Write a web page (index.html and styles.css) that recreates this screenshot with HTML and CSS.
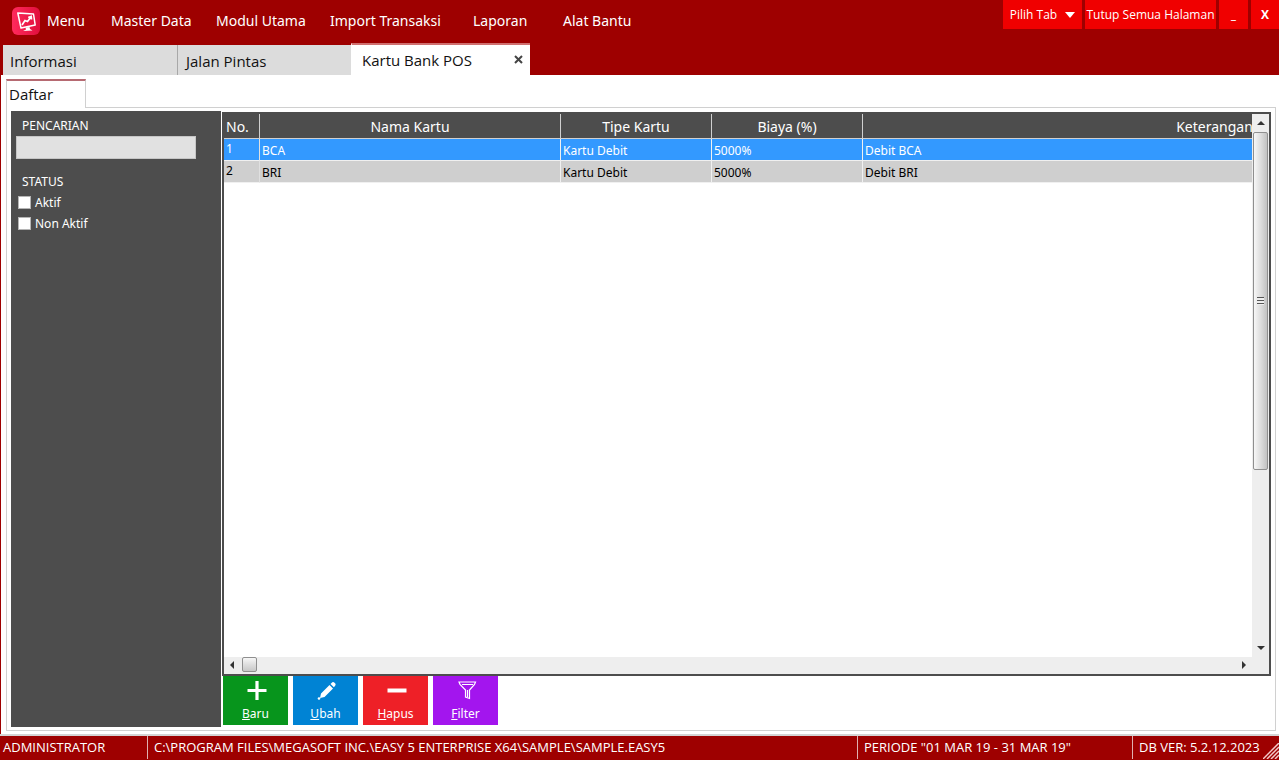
FILE: index.html
```html
<!DOCTYPE html>
<html lang="id">
<head>
<meta charset="utf-8">
<title>Kartu Bank POS</title>
<link rel="stylesheet" href="styles.css">
</head>
<body>
<header class="top">
  <div class="topbar">
    <nav class="menu">
      <a class="menu-item brand" href="#menu">
        <svg class="logo" viewBox="0 0 28 28" aria-hidden="true">
          <defs><linearGradient id="lg" x1="0" y1="0" x2="1" y2="0"><stop offset="0" stop-color="#ff2a5c"/><stop offset="1" stop-color="#e00f3c"/></linearGradient></defs>
          <rect width="28" height="28" rx="6" fill="url(#lg)"/>
          <path d="M5.800 6L21.500 7L23.200 18L9 21Z" fill="none" stroke="#fff" stroke-width="1.500" stroke-linejoin="round"/>
          <path d="M10 18L13 13.500L15.500 14.500L19 10M16.200 10.500L19.200 9.500L19.500 12.500" fill="none" stroke="#fff" stroke-width="1.700"/>
          <path d="M13.500 20.500L17.500 20L18 22L20.500 23.500L11 24L14 22.500Z" fill="#fff"/>
        </svg>
        <span>Menu</span>
      </a>
      <a class="menu-item master" href="#master">Master Data</a>
      <a class="menu-item modul" href="#modul">Modul Utama</a>
      <a class="menu-item import" href="#import">Import Transaksi</a>
      <a class="menu-item laporan" href="#laporan">Laporan</a>
      <a class="menu-item alat" href="#alat">Alat Bantu</a>
    </nav>
    <div class="window-buttons">
      <button class="wbtn pick" type="button">Pilih Tab
        <svg class="caret" viewBox="0 0 10 6" aria-hidden="true"><path d="M0 0H10L5 6Z" fill="#fff"/></svg>
      </button>
      <button class="wbtn close-all" type="button">Tutup Semua Halaman</button>
      <button class="wbtn small" type="button">_</button>
      <button class="wbtn small last" type="button">X</button>
    </div>
  </div>
  <div class="tabs">
    <button class="tab first" type="button">Informasi</button>
    <button class="tab" type="button">Jalan Pintas</button>
    <button class="tab active" type="button"><span>Kartu Bank POS</span><svg class="tab-close" viewBox="0 0 9 9" aria-hidden="true"><path d="M1 1L8 8M8 1L1 8" stroke="#444" stroke-width="2"/></svg></button>
  </div>
</header>
<main class="page">
  <button class="subtab" type="button">Daftar</button>
  <section class="pane">
    <aside class="sidebar">
      <label class="side-title" for="cari">PENCARIAN</label>
      <input class="search" id="cari" type="text">
      <div class="side-title status-title">STATUS</div>
      <label class="check"><input type="checkbox">Aktif</label>
      <label class="check"><input type="checkbox">Non Aktif</label>
    </aside>
    <div class="content">
      <div class="grid">
        <div class="grid-view">
          <table class="data">
            <colgroup><col class="c-no"><col class="c-name"><col class="c-mid"><col class="c-mid"><col class="c-note"></colgroup>
            <thead><tr><th class="no">No.</th><th>Nama Kartu</th><th>Tipe Kartu</th><th>Biaya (%)</th><th>Keterangan</th></tr></thead>
            <tbody>
              <tr class="selected"><td class="no">1</td><td>BCA</td><td>Kartu Debit</td><td>5000%</td><td>Debit BCA</td></tr>
              <tr><td class="no">2</td><td>BRI</td><td>Kartu Debit</td><td>5000%</td><td>Debit BRI</td></tr>
            </tbody>
          </table>
        </div>
        <div class="vbar">
          <svg class="arrow-v" viewBox="0 0 16 18" aria-hidden="true"><path d="M4 11L8 7L12 11Z" fill="#333"/></svg>
          <div class="vthumb"><i class="grip"></i></div>
          <div class="vtrack"></div>
          <svg class="arrow-v" viewBox="0 0 16 18" aria-hidden="true"><path d="M4 7L8 11L12 7Z" fill="#333"/></svg>
        </div>
        <div class="hbar">
          <svg class="arrow-h" viewBox="0 0 18 16" aria-hidden="true"><path d="M10 4L6 8L10 12Z" fill="#333"/></svg>
          <div class="hthumb"></div>
          <div class="htrack"></div>
          <svg class="arrow-h" viewBox="0 0 18 16" aria-hidden="true"><path d="M8 4L12 8L8 12Z" fill="#333"/></svg>
        </div>
        <div class="corner"></div>
      </div>
      <div class="actions">
        <button class="action green" type="button"><svg viewBox="0 0 24 24" aria-hidden="true"><path d="M13 2V21M3.500 11.500H22.500" stroke="#fff" stroke-width="3.200"/></svg><span><u>B</u>aru</span></button>
        <button class="action blue" type="button"><svg viewBox="0 0 24 24" aria-hidden="true"><path d="M7 14.500L15.500 6L19 9.500L10.500 18L6 19ZM16.500 5L18.300 3.300Q19.300 2.500 20.200 3.400L21.300 4.500Q22 5.500 21.300 6.500L19.900 8.300Z" fill="#fff"/><circle cx="5" cy="19.500" r="1.300" fill="#fff"/></svg><span><u>U</u>bah</span></button>
        <button class="action red" type="button"><svg viewBox="0 0 24 24" aria-hidden="true"><path d="M3.500 11.500H22.500" stroke="#fff" stroke-width="4"/></svg><span><u>H</u>apus</span></button>
        <button class="action purple" type="button"><svg viewBox="0 0 24 24" aria-hidden="true"><path d="M5 3H21.500L20.500 5.500L15.500 11V19.500L11.500 18V11L6 5.500ZM8 5.500H19M13.500 11V18" fill="none" stroke="#fff" stroke-width="1.200"/></svg><span><u>F</u>ilter</span></button>
      </div>
    </div>
  </section>
</main>
<footer class="status">
  <span class="user">ADMINISTRATOR</span>
  <span class="path">C:\PROGRAM FILES\MEGASOFT INC.\EASY 5 ENTERPRISE X64\SAMPLE\SAMPLE.EASY5</span>
  <span class="period">PERIODE "01 MAR 19 - 31 MAR 19"</span>
  <span class="version">DB VER: 5.2.12.2023</span>
  <svg class="resize" viewBox="0 0 16 16" aria-hidden="true"><path d="M0 16L16 0M4 16L16 4M8 16L16 8M12 16L16 12" stroke="#f3c9c9" stroke-width="1.500"/></svg>
</footer>
</body>
</html>
```
FILE: styles.css
```css
* { box-sizing: border-box; }
body {
  margin: 0;
  height: 100vh;
  display: flex;
  flex-direction: column;
  background: #9e0000;
  color: #111;
  font-family: "Noto Sans", "Open Sans", sans-serif;
  font-size: 12px;
}
button { font: inherit; color: inherit; border: 0; margin: 0; padding: 0; }

.topbar { display: flex; justify-content: space-between; align-items: flex-start; height: 43px; }
.menu { display: flex; align-items: center; height: 41px; padding-left: 12px; }
.menu-item { color: #fff; text-decoration: none; font-size: 14px; white-space: nowrap; }
.brand { display: flex; align-items: center; gap: 7px; width: 99px; }
.logo { width: 28px; height: 28px; }
.master { width: 105px; }
.modul { width: 114px; }
.import { width: 143px; }
.laporan { width: 90px; }

.window-buttons { display: flex; gap: 3px; }
.wbtn { height: 29px; background: #f00000; color: #fff; font-family: "Open Sans", sans-serif; font-size: 12px; white-space: nowrap; }
.pick { width: 79px; display: flex; align-items: center; justify-content: center; gap: 8px; }
.caret { width: 10px; height: 6px; }
.close-all { width: 131px; }
.small { width: 29px; font-weight: 700; }
.last { width: 28px; }

.tabs { display: flex; align-items: flex-end; height: 32px; padding-left: 3px; }
.tab {
  width: 174px;
  height: 30px;
  padding: 2px 8px 0;
  background: #dcdcdc;
  border-left: 1px solid #a8a8a8;
  text-align: left;
  font-family: "Open Sans", sans-serif;
  font-size: 15px;
}
.tab.first { border-left-color: #dcdcdc; padding-left: 6px; }
.tab.active {
  display: flex;
  justify-content: space-between;
  align-items: center;
  width: 179px;
  height: 32px;
  padding: 0 7px 1px 10px;
  background: #fff;
  border-left-color: #fff;
  border-top: 2px solid #d07070;
}
.tab-close { width: 9px; height: 9px; }

.page {
  flex: 1;
  min-height: 0;
  display: flex;
  flex-direction: column;
  align-items: flex-start;
  margin-left: 1px;
  padding: 4px 3px 3px 5px;
  background: #fff;
}
.subtab {
  position: relative;
  width: 80px;
  height: 29px;
  margin-bottom: -1px;
  padding: 0 2px 2px;
  background: #fff;
  border: 1px solid #d0d0d0;
  border-top: 2px solid #b66a72;
  border-bottom: 0;
  text-align: left;
  font-family: "Open Sans", sans-serif;
  font-size: 15px;
}
.pane {
  flex: 1;
  min-height: 0;
  align-self: stretch;
  display: flex;
  gap: 1px;
  padding: 3px 4px 3px;
  border: 1px solid #d0d0d0;
}
.sidebar { width: 210px; padding: 7px 5px; background: #4d4d4d; color: #fff; }
.side-title { display: block; padding-left: 6px; line-height: 16px; }
.search { display: block; width: 180px; height: 23px; margin-top: 2px; padding: 2px 4px; background: #e1e1e1; border: 1px solid #c6c6c6; font: inherit; }
.status-title { margin-top: 15px; margin-bottom: 2px; }
.check { display: flex; align-items: center; gap: 4px; height: 21px; padding-left: 2px; }
.check input { appearance: none; width: 13px; height: 13px; margin: 0; background: #fff; border: 1px solid #b5b5b5; }

.content { flex: 1; min-width: 0; display: flex; flex-direction: column; padding: 1px 0 2px; }
.grid {
  flex: 1;
  min-height: 0;
  display: grid;
  grid-template-columns: 1fr 17px;
  grid-template-rows: 1fr 17px;
  border: 2px solid #4d4d4d;
  background: #fff;
}
.grid-view { overflow: hidden; min-width: 0; }
.data { width: 1343px; table-layout: fixed; border-collapse: separate; border-spacing: 0; }
.c-no { width: 36px; }
.c-name { width: 301px; }
.c-mid { width: 151px; }
.c-note { width: 704px; }
.data th { height: 25px; padding: 1px 2px 0; background: #4d4d4d; color: #fff; font-size: 14px; font-weight: 400; line-height: 20px; border-right: 1px solid #d0d0d0; border-bottom: 1px solid #d0d0d0; }
.data th.no { text-align: left; }
.data td { height: 22px; padding: 2px 2px 0; background: #cfcfcf; color: #000; line-height: 18px; border-right: 1px solid #f0f0f0; border-bottom: 1px solid #f0f0f0; }
.data td.no { padding: 0 2px 2px; border-right-color: #e0e0e0; }
.data .selected td { background: #3399ff; color: #fff; }

.vbar { display: flex; flex-direction: column; align-items: center; background: #eee; }
.arrow-v { width: 16px; height: 18px; }
.vthumb { flex: 337; width: 15px; display: flex; align-items: center; justify-content: center; border: 1px solid #8f8f8f; border-radius: 2px; background: linear-gradient(90deg, #f7f7f7, #dedede 50%, #c2c2c2); }
.vtrack { flex: 170; }
.grip { width: 7px; height: 8px; background: repeating-linear-gradient(#555 0 1px, #eee 1px 3px); }
.hbar { display: flex; align-items: flex-start; background: #eee; }
.arrow-h { width: 18px; height: 16px; }
.hthumb { width: 15px; height: 15px; border: 1px solid #8f8f8f; border-radius: 2px; background: linear-gradient(#f7f7f7, #dedede 50%, #c8c8c8); }
.htrack { flex: 1; }
.corner { background: #eee; }

.actions { display: flex; gap: 5px; padding-left: 1px; }
.action { width: 65px; height: 49px; display: flex; flex-direction: column; align-items: center; justify-content: space-between; padding: 3px 0 2px; color: #fff; line-height: 18px; }
.action svg { width: 24px; height: 24px; }
.green { background: #07951c; }
.blue { background: #0083d4; }
.red { background: #ee2027; }
.purple { background: #a315ee; }

.status { display: flex; align-items: stretch; height: 26px; border-top: 2px solid #d4d4d4; color: #fff; font-family: "Open Sans", sans-serif; font-size: 13px; line-height: 23px; white-space: nowrap; padding-bottom: 1px; }
.status span { padding-left: 6px; border-left: 1px solid #e0b0b0; }
.status .user { width: 147px; padding-left: 3px; border-left: 0; }
.path { flex: 1; min-width: 0; overflow: hidden; }
.period { width: 275px; }
.version { width: 131px; }
.resize { width: 16px; height: 16px; align-self: flex-end; }
```
